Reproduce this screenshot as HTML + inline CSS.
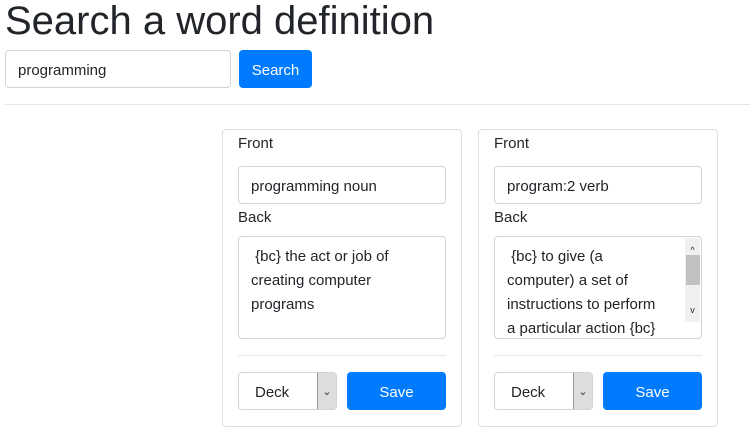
<!DOCTYPE html>
<html><head><style>
body{margin:0;width:750px;height:437px;overflow:hidden;background:#fff;font-family:"Liberation Sans",sans-serif;color:#212529;position:relative}
.a{position:absolute;box-sizing:border-box}
h1{position:absolute;left:5px;top:-4px;margin:0;font-weight:400;font-size:40px;line-height:50px}
.inp{border:1px solid #ced4da;border-radius:4px;background:#fff;font-size:15px;padding-left:12px;display:flex;align-items:center;padding-top:2px}
.btn{background:#007bff;color:#fff;border-radius:4px;font-size:15px;display:flex;align-items:center;justify-content:center;padding-top:2px}
.card{border:1px solid #dfdfdf;border-radius:4px}
.lbl{font-size:15px}
.ta{border:1px solid #ced4da;border-radius:4px;font-size:15px;line-height:24px;padding:8px 12px;overflow:hidden;white-space:nowrap}
.hr{height:1px;background:#e5e5e5}
.sel{border:1px solid #ced4da;border-radius:4px;font-size:15px;padding-left:16px;display:flex;align-items:center;padding-top:2px}
.arr{position:absolute;right:0;top:0;bottom:0;width:18px;background:#ddd;border-left:1px solid #999;font-size:11px;display:flex;align-items:center;justify-content:center;color:#333}
</style></head><body>
<h1>Search a word definition</h1>
<div class="a inp" style="left:5px;top:50px;width:226px;height:38px">programming</div>
<div class="a btn" style="left:239px;top:50px;width:73px;height:38px">Search</div>
<div class="a hr" style="left:5px;top:104px;width:745px"></div>

<div class="a card" style="left:222px;top:129px;width:240px;height:298px"></div>
<div class="a lbl" style="left:238px;top:135px">Front</div>
<div class="a inp" style="left:238px;top:166px;width:208px;height:38px">programming noun</div>
<div class="a lbl" style="left:238px;top:209px">Back</div>
<div class="a ta" style="left:238px;top:236px;width:208px;height:103px">&nbsp;{bc} the act or job of<br>creating computer<br>programs</div>
<div class="a hr" style="left:238px;top:355px;width:208px"></div>
<div class="a sel" style="left:238px;top:372px;width:99px;height:38px">Deck<div class="arr">&#8964;</div></div>
<div class="a btn" style="left:347px;top:372px;width:99px;height:38px">Save</div>

<div class="a card" style="left:478px;top:129px;width:240px;height:298px"></div>
<div class="a lbl" style="left:494px;top:135px">Front</div>
<div class="a inp" style="left:494px;top:166px;width:208px;height:38px">program:2 verb</div>
<div class="a lbl" style="left:494px;top:209px">Back</div>
<div class="a ta" style="left:494px;top:236px;width:208px;height:103px;padding-right:20px">&nbsp;{bc} to give (a<br>computer) a set of<br>instructions to perform<br>a particular action {bc}
<div style="position:absolute;right:1px;top:1px;width:15px;height:84px;background:#f0f0f0"><div style="position:absolute;top:17px;left:1px;width:14px;height:30px;background:#c1c1c1"></div><div style="position:absolute;top:0;width:15px;text-align:center;font-size:9px">^</div><div style="position:absolute;bottom:0;width:15px;text-align:center;font-size:9px">v</div></div></div>
<div class="a hr" style="left:494px;top:355px;width:208px"></div>
<div class="a sel" style="left:494px;top:372px;width:99px;height:38px">Deck<div class="arr">&#8964;</div></div>
<div class="a btn" style="left:603px;top:372px;width:99px;height:38px">Save</div>
</body></html>
